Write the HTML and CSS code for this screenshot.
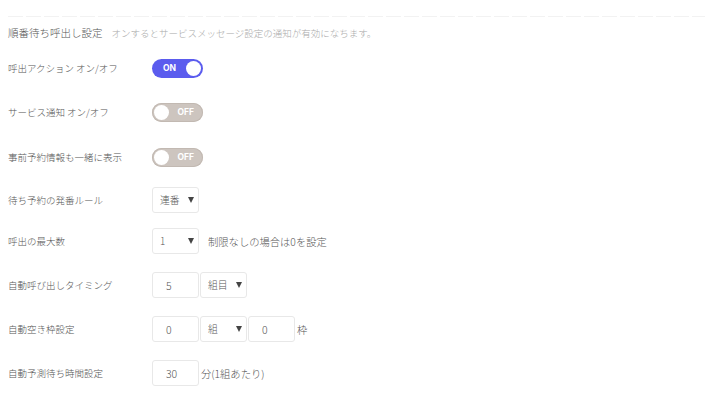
FILE: index.html
```html
<!DOCTYPE html>
<html lang="ja">
<head>
    <meta charset="UTF-8">
    <meta name="viewport" content="width=device-width, initial-scale=1.0">
    <title>順番待ち呼出し設定</title>
    <link rel="stylesheet" href="styles.css">
</head>
<body>
    <div class="linea"></div>

    <div class="cabecera">
        <span class="titulo">順番待ち呼出し設定</span>
        <span class="nota">オンするとサービスメッセージ設定の通知が有効になちます。</span>
    </div>

    <div class="fila">
        <span class="etiqueta">呼出アクション オン/オフ</span>
        <span class="switch on"><span class="texto">ON</span><span class="bola"></span></span>
    </div>

    <div class="fila">
        <span class="etiqueta">サービス通知 オン/オフ</span>
        <span class="switch off"><span class="bola"></span><span class="texto">OFF</span></span>
    </div>

    <div class="fila alta">
        <span class="etiqueta">事前予約情報も一緒に表示</span>
        <span class="switch off"><span class="bola"></span><span class="texto">OFF</span></span>
    </div>

    <div class="fila baja">
        <span class="etiqueta">待ち予約の発番ルール</span>
        <span class="caja select">連番<span class="flecha"></span></span>
    </div>

    <div class="fila">
        <span class="etiqueta">呼出の最大数</span>
        <span class="caja select">1<span class="flecha"></span></span>
        <span class="extra">制限なしの場合は0を設定</span>
    </div>

    <div class="fila">
        <span class="etiqueta">自動呼び出しタイミング</span>
        <span class="caja">5</span>
        <span class="caja select">組目<span class="flecha"></span></span>
    </div>

    <div class="fila">
        <span class="etiqueta">自動空き枠設定</span>
        <span class="caja">0</span>
        <span class="caja select">組<span class="flecha"></span></span>
        <span class="caja">0</span>
        <span class="extra pegado">枠</span>
    </div>

    <div class="fila">
        <span class="etiqueta">自動予測待ち時間設定</span>
        <span class="caja">30</span>
        <span class="extra pegado">分(1組あたり)</span>
    </div>
</body>
</html>
```

FILE: styles.css
```css
body {
    margin: 0;
    padding: 0 4px 0 8px;
    background-color: white;
    color: #555;
    font-family: "Noto Sans CJK JP", "Noto Sans", sans-serif;
    font-weight: 300;
}

.linea {
    margin-top: 16px;
    height: 1px;
    background: repeating-linear-gradient(to right, #f2f2f2 0 15px, transparent 15px 18px);
}

.cabecera {
    display: flex;
    align-items: center;
    gap: 9px;
    height: 29px;
    padding-top: 2px;
    box-sizing: border-box;
}

.titulo {
    font-size: 10.5px;
    color: #555;
}

.nota {
    font-size: 9.5px;
    color: #aaa;
}

.fila {
    display: flex;
    align-items: center;
    height: 44px;
}

.fila.alta {
    height: 46px;
}

.fila.baja {
    height: 39px;
}

.etiqueta {
    width: 144px;
    flex-shrink: 0;
    font-size: 9.5px;
    color: #555;
}

/* interruptores */
.switch {
    display: flex;
    align-items: center;
    justify-content: space-between;
    width: 51px;
    height: 19px;
    border-radius: 10px;
    box-sizing: border-box;
    padding: 0 2px 0 2px;
    font-family: "Inter", "Noto Sans", sans-serif;
    font-size: 8.5px;
    font-weight: 700;
    color: white;
}

.switch.on {
    background-color: #5b5cee;
    padding-left: 11px;
}

.switch.off {
    background-color: #cdc5bf;
    padding-right: 9px;
    box-shadow: inset 0 0 0 1px #c2b9b2;
}

.bola {
    width: 15px;
    height: 15px;
    border-radius: 50%;
    background-color: white;
}

/* campos */
.caja {
    display: flex;
    align-items: center;
    width: 47px;
    height: 26px;
    box-sizing: border-box;
    border: 1px solid #e8e8e8;
    border-radius: 3px;
    padding-left: 13px;
    margin-right: 1px;
    font-size: 10.5px;
    color: #555;
}

.caja.select {
    padding-left: 7px;
    padding-right: 4px;
    justify-content: space-between;
    font-size: 9.8px;
}

.flecha {
    width: 0;
    height: 0;
    border-left: 3px solid transparent;
    border-right: 3px solid transparent;
    border-top: 6px solid #444;
}

.extra {
    font-size: 10.3px;
    margin-left: 8px;
    color: #555;
}

.extra.pegado {
    margin-left: 1px;
}
```
